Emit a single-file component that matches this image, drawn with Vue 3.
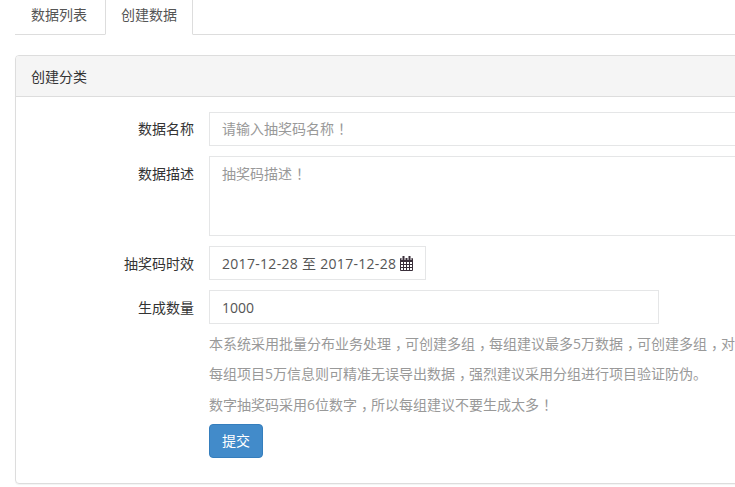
<script setup>
const split = (text) =>
  text.split(/([，！])/).filter(Boolean).map((t) => ({ t, punct: t === '，' || t === '！' }))

const notes = [
  '本系统采用批量分布业务处理，可创建多组，每组建议最多5万数据，可创建多组，对',
  '每组项目5万信息则可精准无误导出数据，强烈建议采用分组进行项目验证防伪。',
  '数字抽奖码采用6位数字，所以每组建议不要生成太多！'
].map(split)

const namePlaceholder = split('请输入抽奖码名称！')
const descPlaceholder = split('抽奖码描述！')

const cellXs = [1, 4, 7, 10]
const cellYs = [6, 9, 12]
</script>

<template>
  <div class="page">
    <div class="tabs">
      <a class="tab">数据列表</a>
      <a class="tab active">创建数据</a>
    </div>
    <section class="panel">
      <header class="panel-head">创建分类</header>
      <form class="panel-body" @submit.prevent>
        <div class="row">
          <label class="label first">数据名称</label>
          <div class="field wide muted">
            <span v-for="(s, i) in namePlaceholder" :key="i" :class="{ punct: s.punct }">{{ s.t }}</span>
          </div>
        </div>
        <div class="row">
          <label class="label">数据描述</label>
          <div class="field wide area muted">
            <span v-for="(s, i) in descPlaceholder" :key="i" :class="{ punct: s.punct }">{{ s.t }}</span>
          </div>
        </div>
        <div class="row">
          <label class="label">抽奖码时效</label>
          <div class="field date">
            <span class="range">2017-12-28 至 2017-12-28</span>
            <svg class="cal" viewBox="0 0 13 15" width="13" height="15" aria-hidden="true">
              <rect x="0" y="2" width="13" height="13" rx="1" fill="#3a2f3a" />
              <rect x="1.500" y="0" width="4" height="4" fill="#fff" />
              <rect x="7.500" y="0" width="4" height="4" fill="#fff" />
              <rect x="2.500" y="0" width="2" height="4" fill="#3a2f3a" />
              <rect x="8.500" y="0" width="2" height="4" fill="#3a2f3a" />
              <template v-for="y in cellYs" :key="y">
                <rect v-for="x in cellXs" :key="x" :x="x" :y="y" width="2" height="2" fill="#fff" />
              </template>
            </svg>
          </div>
        </div>
        <div class="row">
          <label class="label">生成数量</label>
          <div class="field count">1000</div>
        </div>
        <div class="notes">
          <p v-for="(n, idx) in notes" :key="idx" class="note">
            <span v-for="(s, i) in n" :key="i" :class="{ punct: s.punct }">{{ s.t }}</span>
          </p>
        </div>
        <button class="submit" type="submit">提交</button>
      </form>
    </section>
  </div>
</template>

<style>
html, body { margin: 0; overflow: hidden; background: #fff; }
</style>

<style scoped>
.page {
  width: 735px;
  height: 487px;
  overflow: hidden;
  box-sizing: border-box;
  padding-left: 15px;
  font: 14px/20px "Open Sans", "Noto Sans CJK SC", sans-serif;
  color: #333;
}
.punct {
  display: inline-block;
  box-sizing: border-box;
  width: 14px;
  padding-left: 4px;
  font-feature-settings: "halt" 1;
}
.tabs {
  display: flex;
  width: 900px;
  height: 35px;
  box-sizing: border-box;
  border-bottom: 1px solid #ddd;
}
.tab {
  box-sizing: border-box;
  width: 90px;
  height: 35px;
  padding: 5px 0 0 16px;
  color: #555;
}
.tab.active {
  width: 88px;
  padding-left: 15px;
  background: #fff;
  border: 1px solid #ddd;
  border-top: 0;
  border-bottom-color: #fff;
}
.panel {
  width: 900px;
  height: 429px;
  margin-top: 20px;
  box-sizing: border-box;
  border: 1px solid #ddd;
  border-radius: 4px;
  box-shadow: 0 1px 1px rgba(0, 0, 0, .05);
}
.panel-head {
  box-sizing: border-box;
  height: 41px;
  padding: 11px 15px 0;
  background: #f5f5f5;
  border-bottom: 1px solid #ddd;
  border-radius: 3px 3px 0 0;
}
.panel-body {
  padding: 15px 0 0 193px;
}
.row {
  display: flex;
  margin-bottom: 10px;
}
.label {
  width: 178px;
  margin-left: -193px;
  padding-top: 8px;
  text-align: right;
  flex: none;
  margin-right: 15px;
}
.label.first { padding-top: 7px; }
.field {
  box-sizing: border-box;
  height: 34px;
  padding: 7px 12px 0;
  border: 1px solid #e5e6e7;
  background: #fff;
  color: #555;
}
.wide { width: 600px; }
.muted { color: #999; }
.wide:not(.area) { padding-top: 6px; }
.area { height: 80px; }
.date {
  display: flex;
  gap: 4px;
  width: 217px;
  white-space: nowrap;
}
.range { letter-spacing: .3px; }
.cal { flex: none; margin-top: 2px; }
.count { width: 450px; }
.notes { margin-top: 10px; }
.note {
  margin: 0;
  height: 30px;
  line-height: 20px;
  color: #999;
  white-space: nowrap;
}
.note:nth-child(2) { height: 31px; }
.note:nth-child(3) { height: 29px; }
.submit {
  display: block;
  box-sizing: border-box;
  width: 54px;
  height: 34px;
  padding: 0;
  border: 1px solid #357ebd;
  border-radius: 4px;
  background: #428bca;
  color: #fff;
  font: inherit;
}
</style>
